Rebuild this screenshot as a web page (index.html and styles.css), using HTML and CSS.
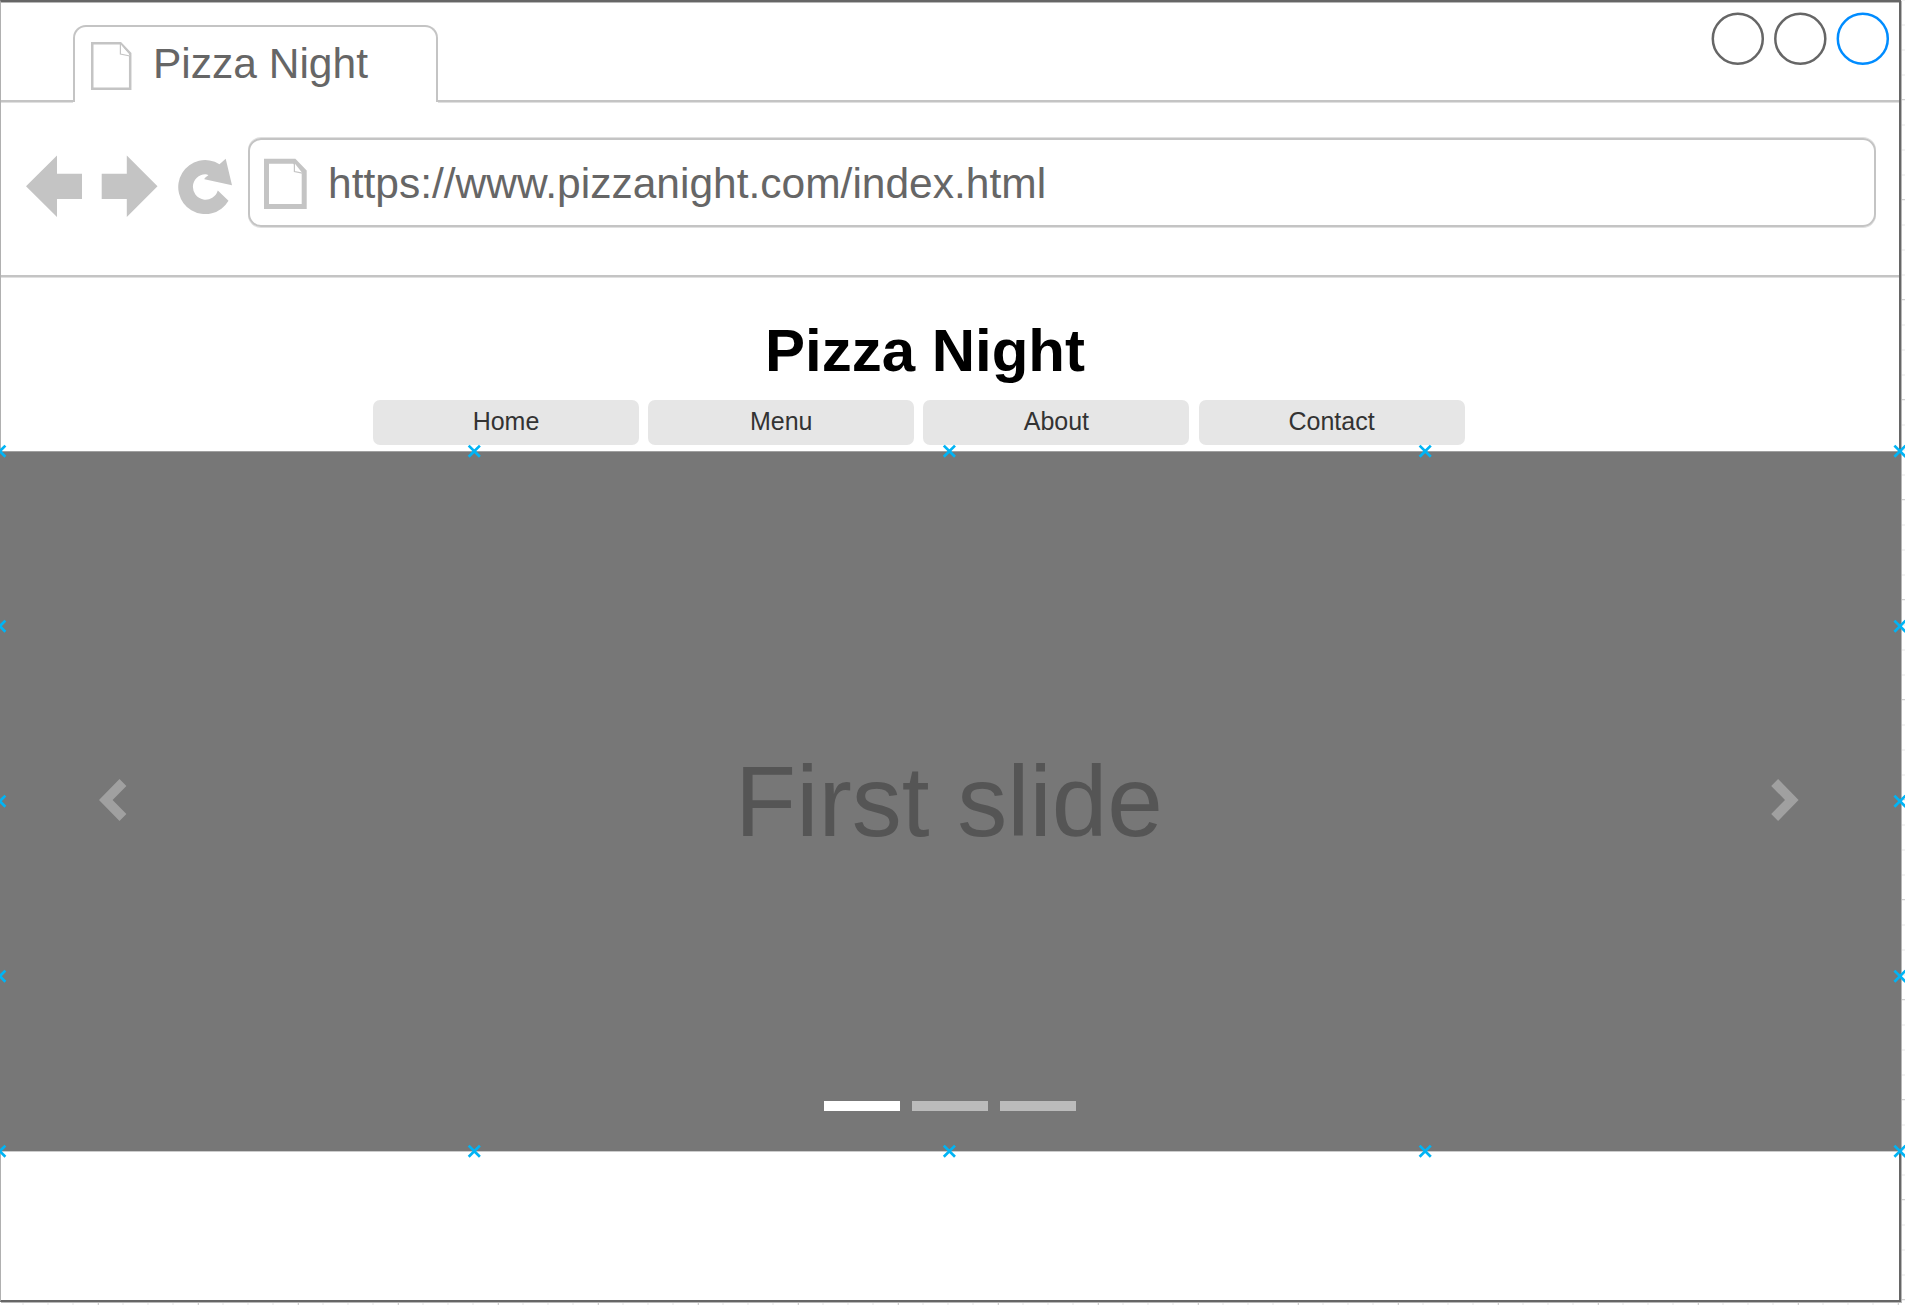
FILE: index.html
```html
<!DOCTYPE html>
<html lang="en">
<head>
<meta charset="utf-8">
<title>Pizza Night</title>
<link rel="stylesheet" href="styles.css">
</head>
<body>
<main class="window">
  <header class="tabstrip">
    <span class="strip-start"></span>
    <div class="tab">
      <svg class="tab-doc" width="44" height="52" viewBox="88 40 44 52"><path d="M91.25 43.25H119.5L129.2 53.5V88.75H91.25Z" stroke-width="2.5"/><path d="M119.4 44V54L129 56" stroke-width="1.2"/></svg>
      <span>Pizza Night</span>
    </div>
    <div class="strip-end">
      <svg class="controls" width="184" height="56" viewBox="1709 10 184 56"><circle cx="1737.8" cy="38.7" r="25"/><circle cx="1800.3" cy="38.7" r="25"/><circle class="active" cx="1862.8" cy="38.7" r="25"/></svg>
    </div>
  </header>
  <section class="toolbar">
    <svg class="nav-icons" width="216" height="70" viewBox="20 152 216 70">
      <path d="M26 186.3L57 155.5V173.7H82V199H57V217Z"/>
      <path d="M157.5 186.3L126.8 155.5V173.7H101.7V199H126.8V217Z"/>
      <path d="M219.5 164.2L225.7 158.8L232 185.2L204.5 179.3Q203.8 178 208.4 175.2Q207 174.2 205.2 174.3A12.7 12.7 0 1 0 217.8 190.6L228.5 200.8A27 27 0 1 1 219.5 164.2Z"/>
    </svg>
    <div class="address">
      <svg class="url-doc" width="46" height="54" viewBox="262 157 46 54"><path d="M266.5 161.2H294.3L304.2 171.5V206.5H266.5Z" stroke-width="5"/><path d="M294.4 163V171.6L302.5 173.2" stroke-width="1.2"/></svg>
      <span>https://www.pizzanight.com/index.html</span>
    </div>
  </section>
  <section class="page">
    <h1>Pizza Night</h1>
    <nav class="menu"><a>Home</a><a>Menu</a><a>About</a><a>Contact</a></nav>
    <div class="carousel">
      <svg class="chevron" width="28" height="44" viewBox="0 0 28 44"><path d="M20.5 1L27.4 7.9L13.6 22L27.4 36L20.5 43L0 22Z"/></svg>
      <p class="caption">First slide</p>
      <svg class="chevron" width="28" height="44" viewBox="0 0 28 44"><path d="M7.1 1L.2 7.9L14 22L.2 36L7.1 43L27.6 22Z"/></svg>
      <div class="dots"><i class="on"></i><i></i><i></i></div>
    </div>
  </section>
</main>
<svg class="handles" width="1905" height="720" viewBox="0 441 1905 720">
  <defs><path id="x" d="M-5.6-5.6L5.6 5.6M-5.6 5.6L5.6-5.6"/></defs>
  <g id="marks">
    <use href="#x" x="-.2" y="451.2"/><use href="#x" x="474.3" y="451.2"/><use href="#x" x="949.4" y="451.2"/><use href="#x" x="1425.2" y="451.2"/><use href="#x" x="1900" y="451.2"/>
    <use href="#x" x="-.2" y="626.2"/><use href="#x" x="1900" y="626.2"/>
    <use href="#x" x="-.2" y="801.2"/><use href="#x" x="1900" y="801.2"/>
    <use href="#x" x="-.2" y="976.2"/><use href="#x" x="1900" y="976.2"/>
    <use href="#x" x="-.2" y="1151.2"/><use href="#x" x="474.3" y="1151.2"/><use href="#x" x="949.4" y="1151.2"/><use href="#x" x="1425.2" y="1151.2"/><use href="#x" x="1900" y="1151.2"/>
  </g>
</svg>
</body>
</html>
```
FILE: styles.css
```css
* { box-sizing: border-box; }
body {
  margin: 0;
  height: 1305px;
  overflow: hidden;
  position: relative;
  font-family: "Liberation Sans", Arial, sans-serif;
  background-color: #fff;
  background-image:
    linear-gradient(90deg, #d0d0d0 1px, transparent 1px),
    linear-gradient(#d0d0d0 1px, transparent 1px),
    linear-gradient(90deg, #f3f3f3 2px, transparent 2px),
    linear-gradient(#f3f3f3 2px, transparent 2px);
  background-size: 100px 100px, 100px 100px, 25px 25px, 25px 25px;
  background-position: 98px 0, 0 99px, 22px 0, 0 24px;
}
svg { display: block; flex: none; }
.window {
  width: 1901px;
  height: 1302px;
  background: #fff;
  border: 2px solid #666;
  border-left: 1px solid #b0b0b0;
  box-shadow: 1px 1px 0 #b8b8b8, inset 0 1px 0 #b8b8b8;
}
.tabstrip { display: flex; align-items: flex-end; height: 100px; }
.strip-start { width: 72px; border-bottom: 2px solid #c4c4c4; box-shadow: 0 1px 0 #e0e0e0; }
.tab {
  width: 365px;
  height: 77px;
  display: flex;
  align-items: center;
  gap: 20px;
  padding: 0 0 2px 14px;
  border: 2px solid #c4c4c4;
  border-bottom: 0;
  border-radius: 13px 13px 0 0;
  color: #666;
  font-size: 42.5px;
}
.tab-doc { margin-top: 5px; }
.tab-doc, .url-doc { fill: #fff; stroke: #c4c4c4; }
.strip-end {
  flex: 1;
  height: 100px;
  display: flex;
  justify-content: flex-end;
  padding: 8px 6px 0 0;
  border-bottom: 2px solid #c4c4c4;
  box-shadow: 0 1px 0 #e0e0e0;
}
.controls { fill: #fff; stroke: #666; stroke-width: 2.5; }
.controls .active { stroke: #008cff; }
.toolbar {
  display: flex;
  height: 175px;
  padding: 36px 23px 0 19px;
  border-bottom: 2px solid #c4c4c4;
  box-shadow: 0 1px 0 #e0e0e0;
}
.nav-icons { fill: #c4c4c4; margin-top: 14px; }
.address {
  flex: 1;
  height: 89px;
  margin-left: 12px;
  display: flex;
  align-items: center;
  gap: 20px;
  padding: 0 0 0 12px;
  border: 2px solid #c4c4c4;
  border-radius: 13px;
  box-shadow: 0 1px 0 #e0e0e0, 0 -1px 0 #e0e0e0;
  color: #666;
  font-size: 42.5px;
}
.url-doc { margin-top: 3px; }
.address span { line-height: 48px; padding-top: 2px; }
.page { display: flex; flex-direction: column; }
h1 {
  width: 1848px;
  margin: 0;
  padding-top: 40px;
  height: 123px;
  line-height: 68px;
  font-size: 60px;
  text-align: center;
  color: #000;
}
.menu { display: flex; gap: 9.2px; padding-left: 372px; height: 51px; }
.menu a {
  width: 266px;
  height: 45px;
  border-radius: 7px;
  background: #e6e6e6;
  color: #333;
  font-size: 25px;
  line-height: 43px;
  text-align: center;
}
.carousel {
  position: relative;
  margin: 0 -2px 0 -1px;
  height: 701px;
  display: flex;
  align-items: center;
  justify-content: space-between;
  padding: 0 102px 0 99px;
  background: #777;
  border-top: 1px solid #a0a0a0;
  border-bottom: 1px solid #ccc;
}
.chevron { fill: #a0a0a0; margin-top: -4px; }
.caption { margin: 0; padding-bottom: 2px; font-size: 100px; line-height: 114px; color: #555; }
/* Slide indicators sit over the slide */
.dots {
  position: absolute;
  left: 0;
  right: 2px;
  bottom: 40px;
  display: flex;
  justify-content: center;
  gap: 12px;
}
.dots i { width: 76px; height: 10px; background: #bbb; }
.dots .on { background: #fff; }
/* Selection handles float over the carousel edges */
.handles { position: absolute; left: 0; top: 441px; fill: none; stroke: #00b4f5; stroke-width: 2.7; }
```
